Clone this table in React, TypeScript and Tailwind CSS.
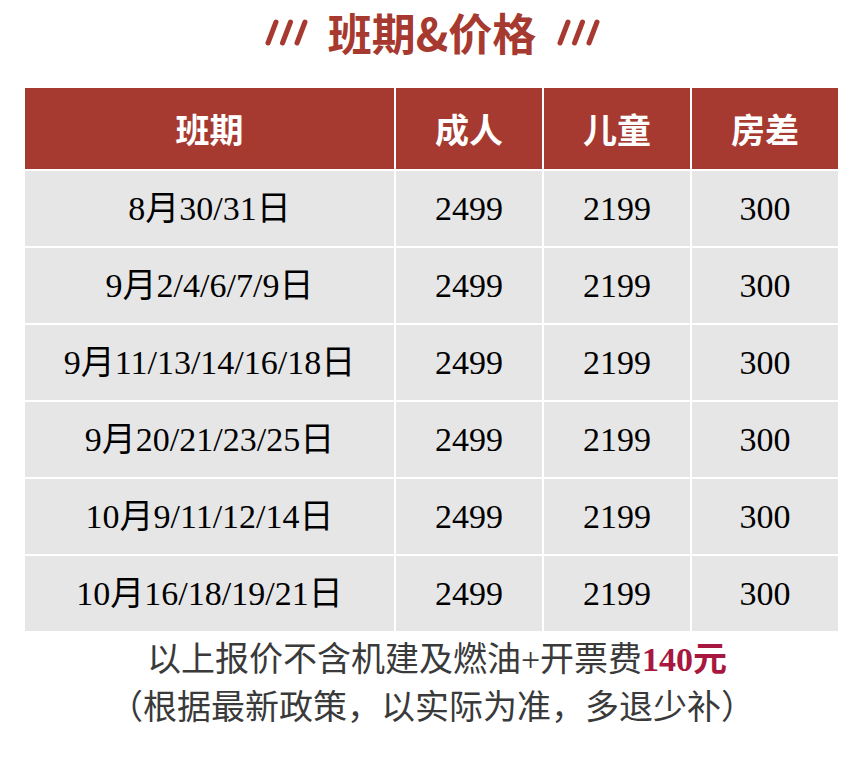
const rows = [
  ["8月30/31日", "2499", "2199", "300"],
  ["9月2/4/6/7/9日", "2499", "2199", "300"],
  ["9月11/13/14/16/18日", "2499", "2199", "300"],
  ["9月20/21/23/25日", "2499", "2199", "300"],
  ["10月9/11/12/14日", "2499", "2199", "300"],
  ["10月16/18/19/21日", "2499", "2199", "300"],
];

const headers = ["班期", "成人", "儿童", "房差"];

function Slashes() {
  return (
    <svg width="44" height="30" viewBox="0 0 44 30" className="shrink-0">
      {[0, 14.5, 29].map((dx) => (
        <line
          key={dx}
          x1={4 + dx}
          y1={26}
          x2={12 + dx}
          y2={5}
          stroke="#a63a30"
          strokeWidth={5}
          strokeLinecap="round"
        />
      ))}
    </svg>
  );
}

export default function App() {
  return (
    <div className="w-[864px] h-[764px] bg-white px-[25px] font-[family-name:Liberation_Serif,Noto_Sans_CJK_SC,serif]">
      {/* title */}
      <div className="h-[62px] flex items-center justify-center gap-[20px] pt-[2px]">
        <Slashes />
        <h1 className="text-[44px] leading-none font-bold text-[#a63a30] font-[family-name:Noto_Sans_CJK_SC,sans-serif]">
          班期&amp;价格
        </h1>
        <Slashes />
      </div>

      {/* table */}
      <div className="mt-[26px] grid grid-cols-[369px_146px_146px_146px] gap-[2px]">
        {headers.map((h) => (
          <div
            key={h}
            className="h-[81px] bg-[#a63a30] flex items-center justify-center text-white text-[34px] font-bold font-[family-name:Noto_Sans_CJK_SC,sans-serif]"
          >
            {h}
          </div>
        ))}
        {rows.map((r, i) =>
          r.map((c, j) => (
            <div
              key={`${i}-${j}`}
              className="h-[75px] bg-[#e6e6e6] flex items-center justify-center text-black text-[34px]"
            >
              {c}
            </div>
          ))
        )}
      </div>

      {/* notes */}
      <div className="mt-[5px] text-center text-[34px] leading-[48px] text-[#3a3a3a]">
        <p className="pl-[10px]">
          以上报价不含机建及燃油+开票费
          <span className="font-bold text-[#a8173f]">140元</span>
        </p>
        <p>（根据最新政策，以实际为准，多退少补）</p>
      </div>
    </div>
  );
}
